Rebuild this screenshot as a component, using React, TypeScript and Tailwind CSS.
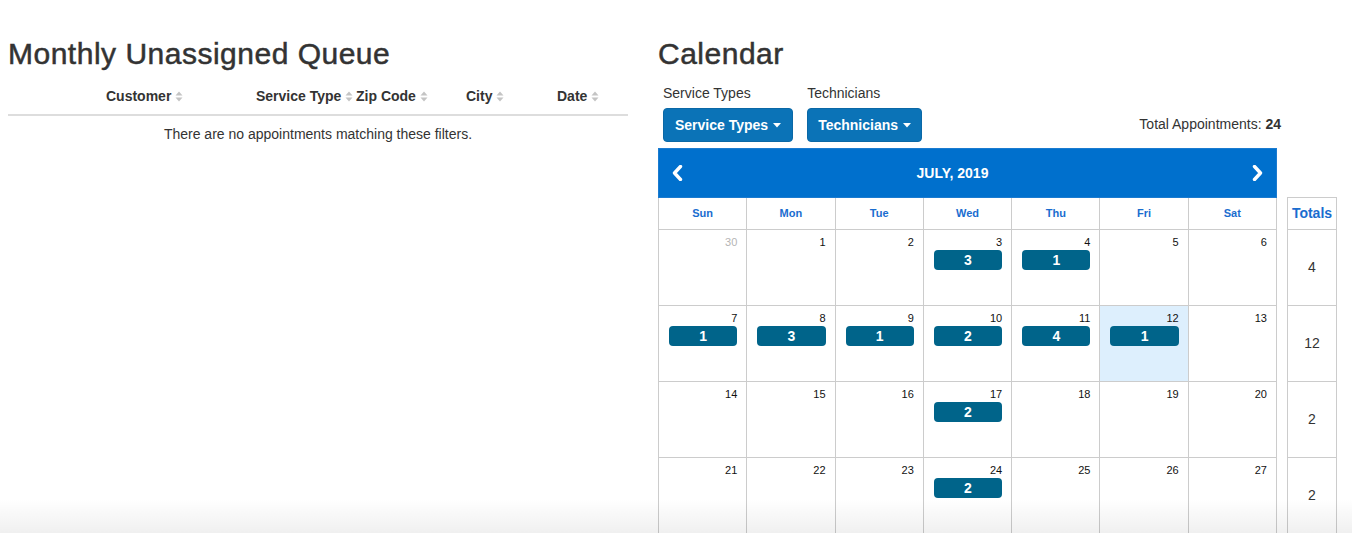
import React from "react";

type Cell = {
  day: number;
  count?: number;
  muted?: boolean;
  today?: boolean;
};

const weeks: Cell[][] = [
  [
    { day: 30, muted: true },
    { day: 1 },
    { day: 2 },
    { day: 3, count: 3 },
    { day: 4, count: 1 },
    { day: 5 },
    { day: 6 },
  ],
  [
    { day: 7, count: 1 },
    { day: 8, count: 3 },
    { day: 9, count: 1 },
    { day: 10, count: 2 },
    { day: 11, count: 4 },
    { day: 12, count: 1, today: true },
    { day: 13 },
  ],
  [
    { day: 14 },
    { day: 15 },
    { day: 16 },
    { day: 17, count: 2 },
    { day: 18 },
    { day: 19 },
    { day: 20 },
  ],
  [
    { day: 21 },
    { day: 22 },
    { day: 23 },
    { day: 24, count: 2 },
    { day: 25 },
    { day: 26 },
    { day: 27 },
  ],
];

const totals = [4, 12, 2, 2];

const days = ["Sun", "Mon", "Tue", "Wed", "Thu", "Fri", "Sat"];

const columns = [
  { label: "", width: "w-[90px]" },
  { label: "Customer", width: "w-[150px]" },
  { label: "Service Type", width: "w-[100px]" },
  { label: "Zip Code", width: "w-[110px]" },
  { label: "City", width: "w-[91px]" },
  { label: "Date", width: "w-[79px]" },
];

function SortIcon() {
  return (
    <svg width="8" height="11" viewBox="0 0 8 11" className="ml-[4px] shrink-0">
      <path d="M4 0.5 L7.5 4.5 H0.5 Z" fill="#c4c4c4" />
      <path d="M4 10.5 L7.5 6.5 H0.5 Z" fill="#c4c4c4" />
    </svg>
  );
}

function Caret() {
  return (
    <svg width="8" height="5" viewBox="0 0 8 5" className="ml-[5px]">
      <path d="M0 0 H8 L4 4.5 Z" fill="#ffffff" />
    </svg>
  );
}

function Chevron({ dir }: { dir: "left" | "right" }) {
  return (
    <svg width="12" height="16" viewBox="0 0 12 16">
      {dir === "left" ? (
        <path d="M9.5 1.5 L3.5 8 L9.5 14.5" stroke="#fff" strokeWidth="3.4" fill="none" strokeLinejoin="round" strokeLinecap="round" />
      ) : (
        <path d="M2.5 1.5 L8.5 8 L2.5 14.5" stroke="#fff" strokeWidth="3.4" fill="none" strokeLinejoin="round" strokeLinecap="round" />
      )}
    </svg>
  );
}

function DayCell({ cell }: { cell: Cell }) {
  return (
    <div
      className={
        "h-[76px] border-r border-b border-[#cccccc] pl-[10px] pr-[9px] pt-[5px] " +
        (cell.today ? "bg-[#ddeffd]" : "bg-white")
      }
    >
      <div
        className={
          "text-right text-[11px] leading-[14px] " +
          (cell.muted ? "text-[#b5b5b5]" : "text-[#111]")
        }
      >
        {cell.day}
      </div>
      {cell.count !== undefined && (
        <div className="mt-[1px] flex h-[20px] items-center justify-center rounded-[4px] bg-[#00648a] text-[14px] font-bold text-white">
          {cell.count}
        </div>
      )}
    </div>
  );
}

export default function App() {
  return (
    <div className="relative h-[533px] overflow-hidden bg-white font-['Liberation_Sans',Arial,sans-serif] text-[#333]">
      <div className="flex pl-[8px] pt-[37px]">
        {/* queue */}
        <section className="w-[620px] shrink-0">
          <h2 className="text-[30px] leading-[33px] font-normal tracking-[0.5px] text-[#333] [-webkit-text-stroke:0.5px_#333]">
            Monthly Unassigned Queue
          </h2>
          <div className="mt-[8px]">
            <div className="flex border-b-2 border-[#dddddd]">
              {columns.map((col, i) => (
                <div
                  key={i}
                  className={
                    col.width +
                    " flex h-[36px] items-center whitespace-nowrap pl-[8px] text-[14px] font-bold"
                  }
                >
                  {col.label && (
                    <>
                      <span>{col.label}</span>
                      <SortIcon />
                    </>
                  )}
                </div>
              ))}
            </div>
            <p className="py-[8px] text-center text-[14px] leading-[20px]">
              There are no appointments matching these filters.
            </p>
          </div>
        </section>

        {/* calendar */}
        <section className="ml-[30px] w-[680px] shrink-0">
          <h2 className="text-[30px] leading-[33px] font-normal tracking-[0.5px] text-[#333] [-webkit-text-stroke:0.5px_#333]">
            Calendar
          </h2>

          <div className="mt-[13px] flex items-end pl-[5px] pr-[57px]">
            <div className="mr-[14px]">
              <div className="text-[14px] leading-[20px]">Service Types</div>
              <button className="mt-[5px] flex h-[34px] items-center rounded-[4px] border border-[#0a68a6] bg-[#0b73b7] px-[11px] text-[14px] font-bold text-white">
                Service Types
                <Caret />
              </button>
            </div>
            <div>
              <div className="text-[14px] leading-[20px]">Technicians</div>
              <button className="mt-[5px] flex h-[34px] items-center rounded-[4px] border border-[#0a68a6] bg-[#0b73b7] px-[10px] text-[14px] font-bold text-white">
                Technicians
                <Caret />
              </button>
            </div>
            <div className="ml-auto mb-[8px] text-[14px] leading-[20px]">
              Total Appointments: <span className="font-bold">24</span>
            </div>
          </div>

          <div className="mt-[6px] flex">
            <div className="w-[619px] shrink-0">
              <div className="flex h-[50px] items-center justify-between border border-[#1b7bd0] bg-[#0070cd] px-[12px]">
                <Chevron dir="left" />
                <span className="pr-[30px] text-[14px] font-bold text-white">JULY, 2019</span>
                <Chevron dir="right" />
              </div>
              <div className="grid grid-cols-7 border-l border-[#cccccc]">
                {days.map((d) => (
                  <div
                    key={d}
                    className="flex h-[32px] items-center justify-center border-r border-b border-[#cccccc] text-[11px] font-bold text-[#1a6dcf]"
                  >
                    {d}
                  </div>
                ))}
                {weeks.map((week, wi) =>
                  week.map((cell, ci) => <DayCell key={wi + "-" + ci} cell={cell} />)
                )}
              </div>
            </div>

            <div className="ml-[10px] mt-[49px] w-[50px] shrink-0 border border-[#cccccc] border-b-0">
              <div className="flex h-[32px] items-center justify-center border-b border-[#cccccc] text-[14px] font-bold text-[#1a6dcf]">
                Totals
              </div>
              {totals.map((t, i) => (
                <div
                  key={i}
                  className="flex h-[76px] items-center justify-center border-b border-[#cccccc] text-[14px]"
                >
                  {t}
                </div>
              ))}
            </div>
          </div>
        </section>
      </div>

      <div className="pointer-events-none absolute inset-x-0 bottom-0 h-[34px] bg-gradient-to-b from-white/0 to-[#000]/[0.06]" />
    </div>
  );
}
